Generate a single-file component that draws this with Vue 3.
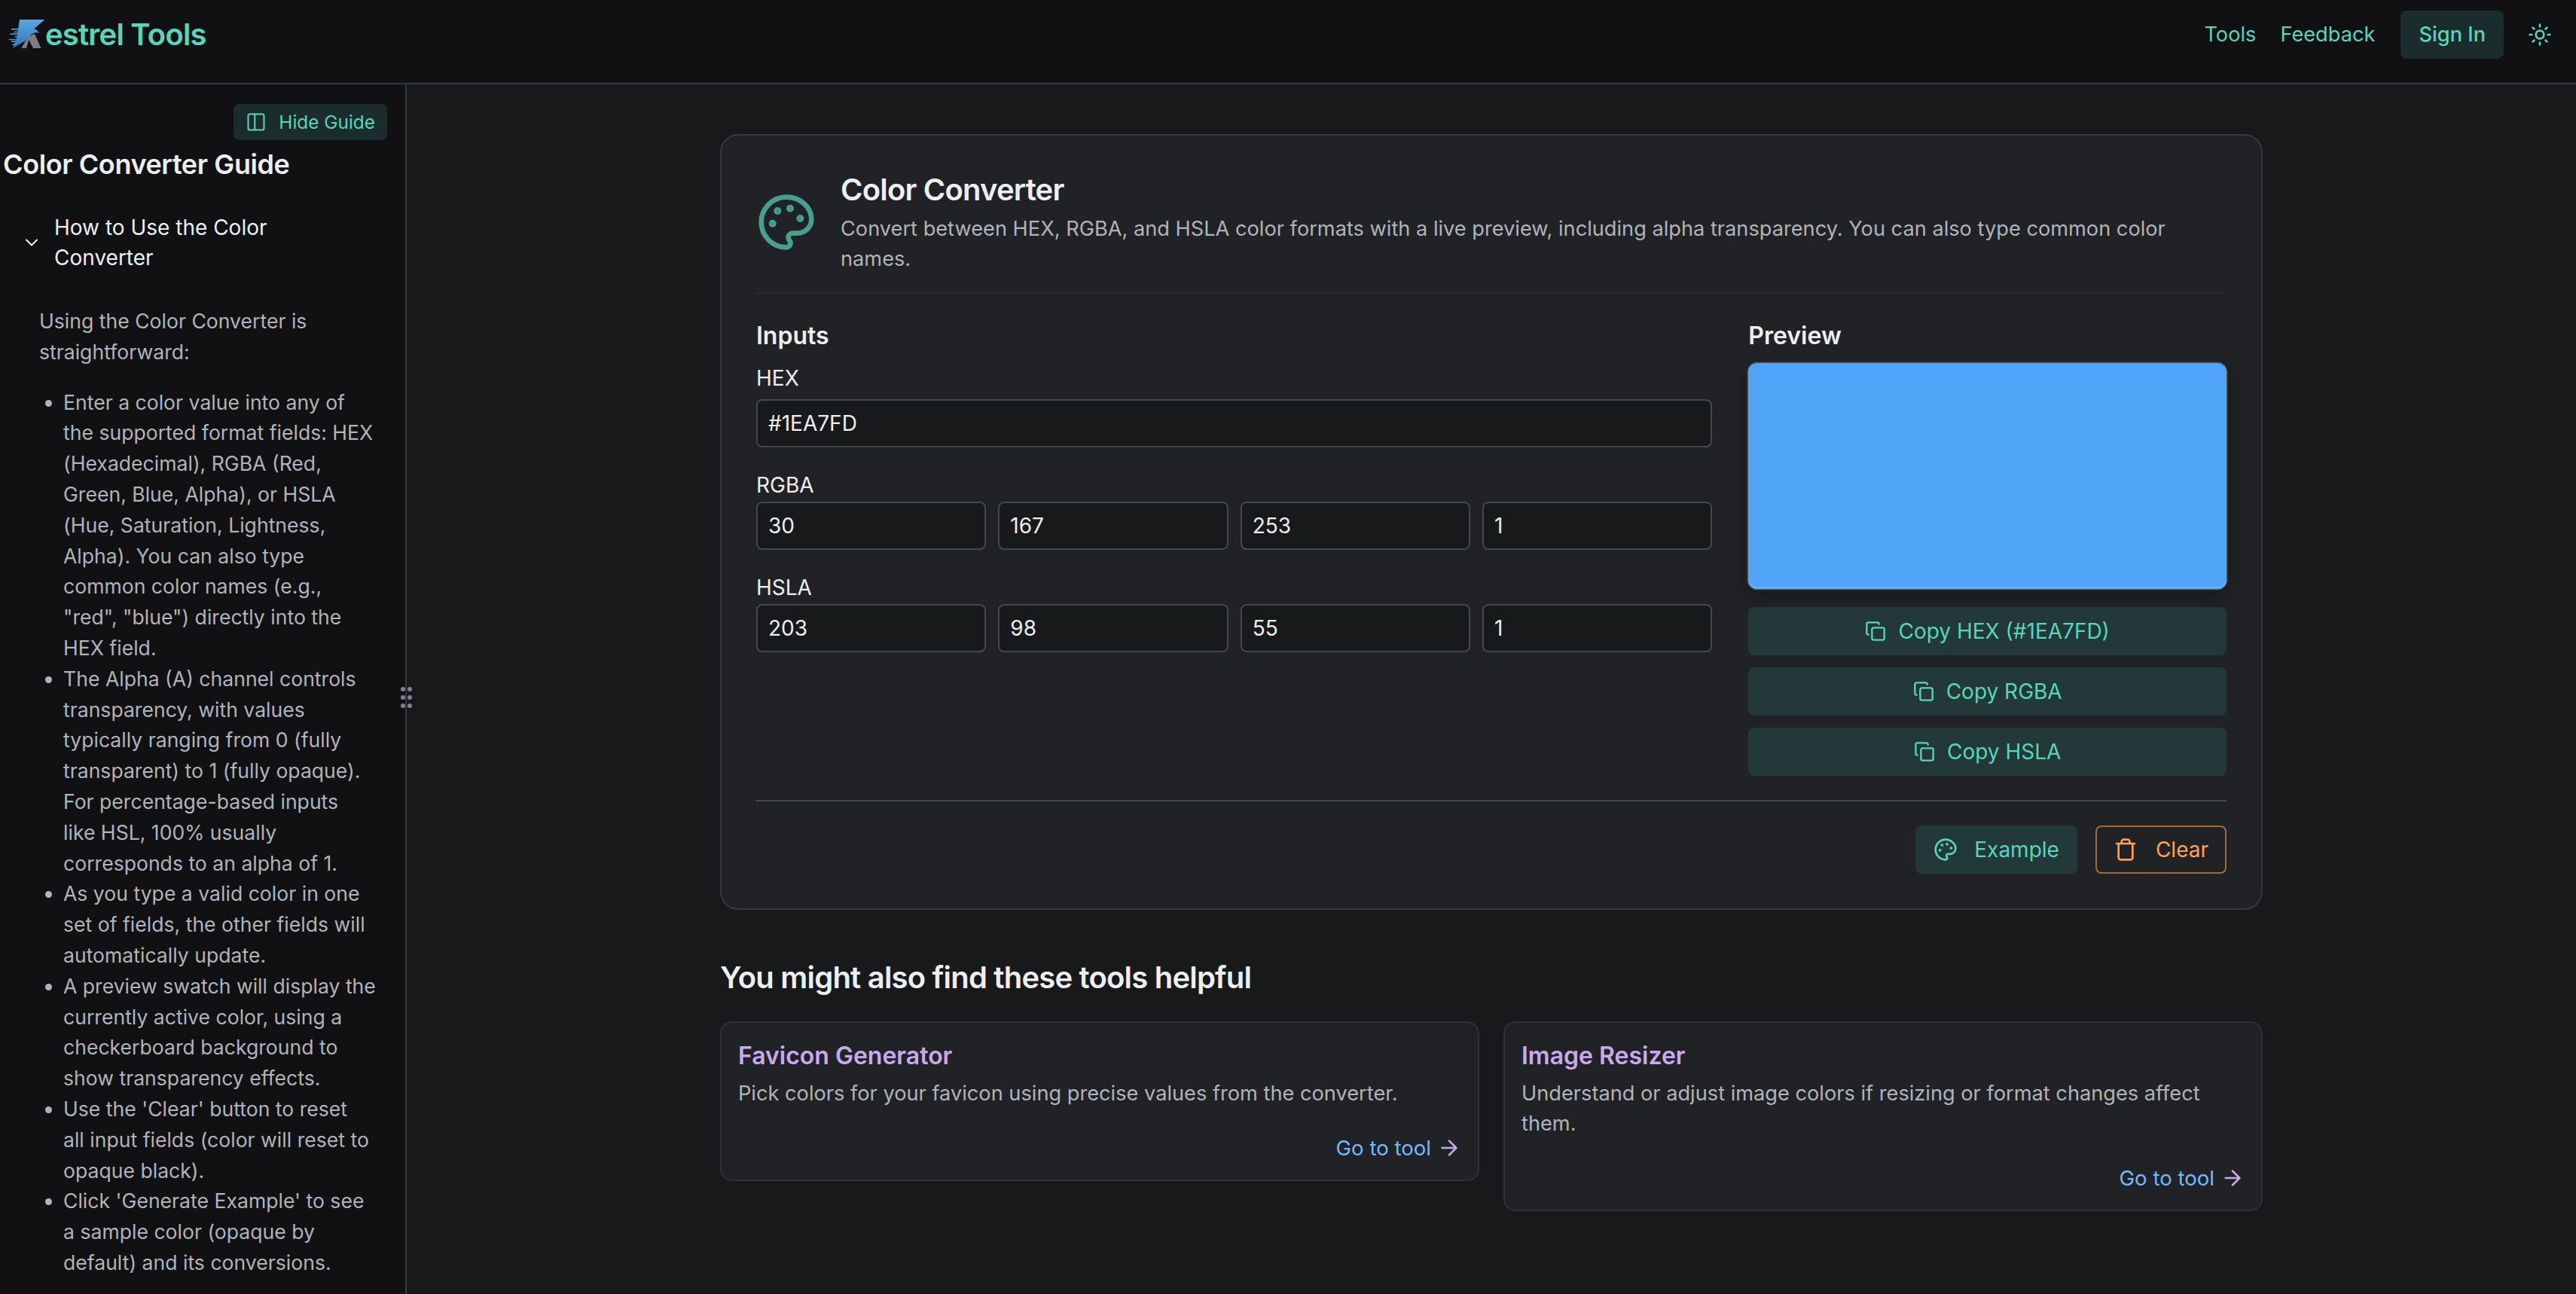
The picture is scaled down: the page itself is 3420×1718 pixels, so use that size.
<script setup>
import { ref } from 'vue'

const hex = ref('#1EA7FD')
const rgba = ref(['30', '167', '253', '1'])
const hsla = ref(['203', '98', '55', '1'])

const copyLabels = ['Copy HEX (#1EA7FD)', 'Copy RGBA', 'Copy HSLA']

// the \u00a0 keep two words together so the lines break like the original page
const guideSteps = [
  'Enter a color value into any of the supported format fields: HEX (Hexadecimal), RGBA (Red, Green, Blue, Alpha), or HSLA (Hue, Saturation, Lightness, Alpha). You can also type common color names (e.g., "red", "blue") directly into the HEX field.',
  'The Alpha (A) channel controls transparency, with values typically ranging from 0 (fully transparent) to 1 (fully opaque). For percentage-based inputs like\u00a0HSL, 100% usually corresponds to an alpha of 1.',
  'As you type a valid color in one set of fields, the other fields will automatically update.',
  'A preview swatch will display the currently active color, using a checkerboard background to show transparency effects.',
  "Use the 'Clear' button to reset all\u00a0input fields (color will reset to opaque black).",
  "Click 'Generate Example' to see a sample color (opaque by default) and its conversions."
]

const relatedTools = [
  { name: 'Favicon Generator', text: 'Pick colors for your favicon using precise values from the converter.' },
  { name: 'Image Resizer', text: 'Understand or adjust image colors if resizing or format changes affect them.' }
]

const palettePath = 'M12 2C6.5 2 2 6.5 2 12s4.5 10 10 10c.926 0 1.648-.746 1.648-1.688 0-.437-.18-.835-.437-1.125-.29-.289-.438-.652-.438-1.125a1.64 1.64 0 0 1 1.668-1.668h1.996c3.051 0 5.555-2.503 5.555-5.554C21.965 6.012 17.461 2 12 2z'
const paletteDots = [[13.5, 6.5], [17.5, 10.5], [8.5, 7.5], [6.5, 12.5]]
</script>

<template>
  <div class="page">
    <header class="topbar">
      <div class="brand">
        <svg class="brand-mark" width="60" height="60" viewBox="0 0 180 180">
          <defs>
            <linearGradient id="kBlue" x1="0" y1="0" x2="0" y2="1">
              <stop offset="0" stop-color="#5aa6e0" />
              <stop offset="1" stop-color="#3277bb" />
            </linearGradient>
          </defs>
          <path d="M85 147 L112 100 L138 90 L164 147 H132 L115 114 L105 147 Z" fill="#7b7e83" />
          <path d="M78 33 H136 L122 62 L134 33 H178 L136 70 L148 76 L156 86 L142 84 L124 92 L100 118 L52 146 L68 100 Z" fill="url(#kBlue)" />
          <path d="M45 68h32v6H45zM55 80h22v5H55zM40 88h34v5H40zM35 110h30v5H35zM45 118h20v5H45zM50 130h12v5H50zM58 98h12v5H58z" fill="#4690cc" />
        </svg>
        <span class="brand-name">estrel Tools</span>
      </div>
      <nav class="topnav">
        <a class="nav-link">Tools</a>
        <a class="nav-link">Feedback</a>
        <button class="sign-in">Sign In</button>
        <svg class="sun" width="32" height="32" viewBox="0 0 24 24" fill="none" stroke="currentColor" stroke-width="2" stroke-linecap="round" stroke-linejoin="round">
          <circle cx="12" cy="12" r="4" />
          <path d="M12 2v2M12 20v2M4.93 4.93l1.41 1.41M17.66 17.66l1.41 1.41M2 12h2M20 12h2M6.34 17.66l-1.41 1.41M19.07 4.93l-1.41 1.41" />
        </svg>
      </nav>
    </header>

    <div class="body">
      <aside class="guide">
        <div class="guide-toolbar">
          <button class="hide-guide">
            <svg width="28" height="28" viewBox="0 0 24 24" fill="none" stroke="currentColor" stroke-width="1.75" stroke-linecap="round" stroke-linejoin="round">
              <rect x="3" y="3" width="18" height="18" rx="2" />
              <path d="M10.5 3v18" />
            </svg>
            Hide Guide
          </button>
        </div>
        <h2 class="guide-title">Color Converter Guide</h2>
        <div class="guide-section">
          <svg class="chevron" width="28" height="28" viewBox="0 0 24 24" fill="none" stroke="currentColor" stroke-width="1.8" stroke-linecap="round" stroke-linejoin="round">
            <path d="m6 9 6 6 6-6" />
          </svg>
          <span>How to Use the Color Converter</span>
        </div>
        <div class="guide-body">
          <p>Using the Color Converter is straightforward:</p>
          <ul>
            <li v-for="step in guideSteps" :key="step">{{ step }}</li>
          </ul>
        </div>
        <div class="resize-handle">
          <i v-for="n in 6" :key="n"></i>
        </div>
      </aside>

      <main class="content">
        <div class="column">
          <section class="tool-card">
            <div class="tool-head">
              <svg class="tool-icon" width="80" height="80" viewBox="0 0 24 24" fill="none" stroke="currentColor" stroke-width="2" stroke-linecap="round" stroke-linejoin="round">
                <path :d="palettePath" />
                <circle v-for="d in paletteDots" :key="d[0]" :cx="d[0]" :cy="d[1]" r=".5" fill="currentColor" />
              </svg>
              <div>
                <h1>Color Converter</h1>
                <p>Convert between HEX, RGBA, and HSLA color formats with a live preview, including alpha transparency. You can also type common color names.</p>
              </div>
            </div>

            <div class="tool-grid">
              <div>
                <h3>Inputs</h3>
                <label class="field-label">HEX</label>
                <input v-model="hex" class="field hex-field" />
                <label class="field-label">RGBA</label>
                <div class="field-row">
                  <input v-for="(v, i) in rgba" :key="i" v-model="rgba[i]" class="field" />
                </div>
                <label class="field-label">HSLA</label>
                <div class="field-row">
                  <input v-for="(v, i) in hsla" :key="i" v-model="hsla[i]" class="field" />
                </div>
              </div>
              <div>
                <h3>Preview</h3>
                <div class="swatch"></div>
                <div class="copy-list">
                  <button v-for="label in copyLabels" :key="label" class="btn-soft copy-btn">
                    <svg width="28" height="28" viewBox="0 0 24 24" fill="none" stroke="currentColor" stroke-width="2" stroke-linecap="round" stroke-linejoin="round">
                      <rect x="8" y="8" width="14" height="14" rx="2" />
                      <path d="M4 16c-1.1 0-2-.9-2-2V4c0-1.1.9-2 2-2h10c1.1 0 2 .9 2 2" />
                    </svg>
                    {{ label }}
                  </button>
                </div>
              </div>
            </div>

            <div class="tool-actions">
              <button class="btn-soft action-btn">
                <svg width="32" height="32" viewBox="0 0 24 24" fill="none" stroke="currentColor" stroke-width="2" stroke-linecap="round" stroke-linejoin="round">
                  <path :d="palettePath" />
                  <circle v-for="d in paletteDots" :key="d[0]" :cx="d[0]" :cy="d[1]" r=".5" fill="currentColor" />
                </svg>
                Example
              </button>
              <button class="btn-outline action-btn">
                <svg width="32" height="32" viewBox="0 0 24 24" fill="none" stroke="currentColor" stroke-width="2" stroke-linecap="round" stroke-linejoin="round">
                  <path d="M3 6h18M19 6v14c0 1-1 2-2 2H7c-1 0-2-1-2-2V6M8 6V4c0-1 1-2 2-2h4c1 0 2 1 2 2v2" />
                </svg>
                Clear
              </button>
            </div>
          </section>

          <h2 class="related-title">You might also find these tools helpful</h2>
          <div class="related-grid">
            <div v-for="tool in relatedTools" :key="tool.name" class="related-card">
              <h4>{{ tool.name }}</h4>
              <p>{{ tool.text }}</p>
              <a class="go-link">
                Go to tool
                <svg width="32" height="32" viewBox="0 0 24 24" fill="none" stroke="currentColor" stroke-width="2" stroke-linecap="round" stroke-linejoin="round">
                  <path d="M5 12h14M12 5l7 7-7 7" />
                </svg>
              </a>
            </div>
          </div>
        </div>
      </main>
    </div>
  </div>
</template>

<style>
html,
body {
  margin: 0;
  background: #18191b;
}
</style>

<style scoped>
.page {
  height: 1718px;
  overflow: hidden;
  display: flex;
  flex-direction: column;
  font-family: Inter, "Liberation Sans", sans-serif;
  font-size: 28px;
  line-height: 40px;
  color: #edeef0;
  background: #18191b;
}

h1, h2, h3, h4, p, ul {
  margin: 0;
}

button {
  font: inherit;
  border: none;
  cursor: pointer;
}

.topbar {
  flex: none;
  height: 110px;
  display: flex;
  justify-content: space-between;
  align-items: flex-start;
  padding-right: 32px;
  background: #111113;
  border-bottom: 2px solid #363a3f;
}

.brand {
  display: flex;
  margin-top: 15px;
}

.brand-name {
  font-size: 40px;
  line-height: 62px;
  font-weight: 600;
  letter-spacing: -0.8px;
  color: #58d5ba;
}

.topnav {
  display: flex;
  align-items: center;
  gap: 32px;
  margin-top: 14px;
  font-size: 27.2px;
  color: #58d5ba;
}

.sign-in {
  height: 64px;
  margin-left: 2px;
  padding: 0 24px;
  border-radius: 8px;
  font-weight: 500;
  color: #58d5ba;
  background: #1a2d2c;
}

.sun {
  display: block;
}

.body {
  flex: 1;
  min-height: 0;
  display: flex;
}

.guide {
  flex: none;
  width: 540px;
  box-sizing: border-box;
  position: relative;
  padding: 26px 24px 0 4px;
  background: #111113;
  border-right: 2px solid #363a3f;
}

.guide-toolbar {
  display: flex;
  justify-content: flex-end;
  margin-bottom: 8px;
}

.hide-guide {
  height: 48px;
  display: flex;
  align-items: center;
  gap: 16px;
  padding: 0 16px;
  border-radius: 8px;
  font-size: 24.4px;
  color: #58d5ba;
  background: #1a2d2c;
}

.guide-title {
  font-size: 36px;
  line-height: 48px;
  font-weight: 600;
  letter-spacing: -0.4px;
}

.guide-section {
  display: flex;
  align-items: center;
  gap: 16px;
  margin-top: 40px;
  padding: 0 60px 0 24px;
}

.chevron {
  flex: none;
}

.guide-body {
  margin-top: 44px;
  padding: 0 12px 0 48px;
  font-size: 26.6px;
  line-height: 40.8px;
  color: #b0b4ba;
}

.guide-body ul {
  margin-top: 26px;
  padding-left: 32px;
}

.resize-handle {
  position: absolute;
  top: 800px;
  right: -9px;
  display: grid;
  grid-template-columns: 6px 6px;
  gap: 5px 3px;
  z-index: 2;
}

.resize-handle i {
  width: 6px;
  height: 6px;
  border-radius: 50%;
  background: #80838d;
}

.content {
  flex: 1;
  min-width: 0;
  display: flex;
  justify-content: center;
  padding-top: 66px;
}

.column {
  width: 2048px;
}

.tool-card {
  padding: 46px;
  background: #212225;
  border: 2px solid #363a3f;
  border-radius: 24px;
}

.tool-head {
  display: flex;
  align-items: center;
  gap: 32px;
  padding-bottom: 24px;
  border-bottom: 2px solid #2a2c30;
}

.tool-icon {
  flex: none;
  color: #45a090;
}

.tool-head h1 {
  font-size: 40px;
  line-height: 48px;
  font-weight: 600;
  letter-spacing: -0.8px;
  margin: 2px 0 8px;
}

.tool-head p {
  font-size: 27.2px;
  color: #b0b4ba;
}

.tool-grid {
  display: grid;
  grid-template-columns: 2fr 1fr;
  gap: 48px;
  margin-top: 32px;
}

.tool-grid h3 {
  font-size: 32px;
  line-height: 44px;
  font-weight: 600;
  padding-top: 2px;
  margin-bottom: 14px;
}

.field-label {
  display: block;
}

.field {
  display: block;
  width: 100%;
  min-width: 0;
  height: 64px;
  box-sizing: border-box;
  padding: 0 14px;
  font: inherit;
  color: #edeef0;
  background: #18191b;
  border: 2px solid #43484e;
  border-radius: 8px;
  outline: none;
}

.hex-field {
  margin: 8px 0 30px;
}

.field-row {
  display: grid;
  grid-template-columns: repeat(4, 1fr);
  gap: 16px;
  margin: 2px 0 30px;
}

.swatch {
  height: 300px;
  border-radius: 12px;
  background: #50a5f8;
  box-shadow: 0 0 0 1.5px #4a4f55, inset 0 -3px 0 rgba(255, 255, 255, 0.14), 0 8px 24px rgba(0, 0, 0, 0.3);
}

.copy-list {
  display: flex;
  flex-direction: column;
  gap: 16px;
  margin-top: 24px;
}

.btn-soft {
  color: #58d5ba;
  background: #233838;
}

.copy-btn {
  height: 64px;
  display: flex;
  justify-content: center;
  align-items: center;
  gap: 16px;
  border-radius: 8px;
}

.tool-actions {
  display: flex;
  justify-content: flex-end;
  gap: 24px;
  margin-top: 32px;
  padding-top: 32px;
  border-top: 2px solid #43484e;
}

.action-btn {
  height: 64px;
  box-sizing: border-box;
  display: flex;
  align-items: center;
  gap: 22px;
  padding: 0 24px;
  border-radius: 8px;
}

.btn-outline {
  gap: 24px;
  padding: 0 22px;
  color: #ffa057;
  background: transparent;
  border: 2px solid #a9683c;
}

.related-title {
  margin-top: 66px;
  font-size: 40px;
  line-height: 48px;
  font-weight: 600;
  letter-spacing: -0.8px;
}

.related-grid {
  display: grid;
  grid-template-columns: 1fr 1fr;
  gap: 32px;
  align-items: start;
  margin-top: 34px;
}

.related-card {
  display: flex;
  flex-direction: column;
  padding: 24px 22px 22px;
  background: #212225;
  border: 2px solid #2e3135;
  border-radius: 16px;
}

.related-card h4 {
  font-size: 32px;
  line-height: 40px;
  font-weight: 600;
  color: #c8aaeb;
  margin-bottom: 10px;
}

.related-card p {
  font-size: 27.2px;
  color: #b0b4ba;
}

.go-link {
  align-self: flex-end;
  display: flex;
  align-items: center;
  gap: 8px;
  margin-top: 32px;
  font-size: 27.6px;
  color: #70b8ff;
}

.go-link svg {
  color: #c8aaeb;
}
</style>
